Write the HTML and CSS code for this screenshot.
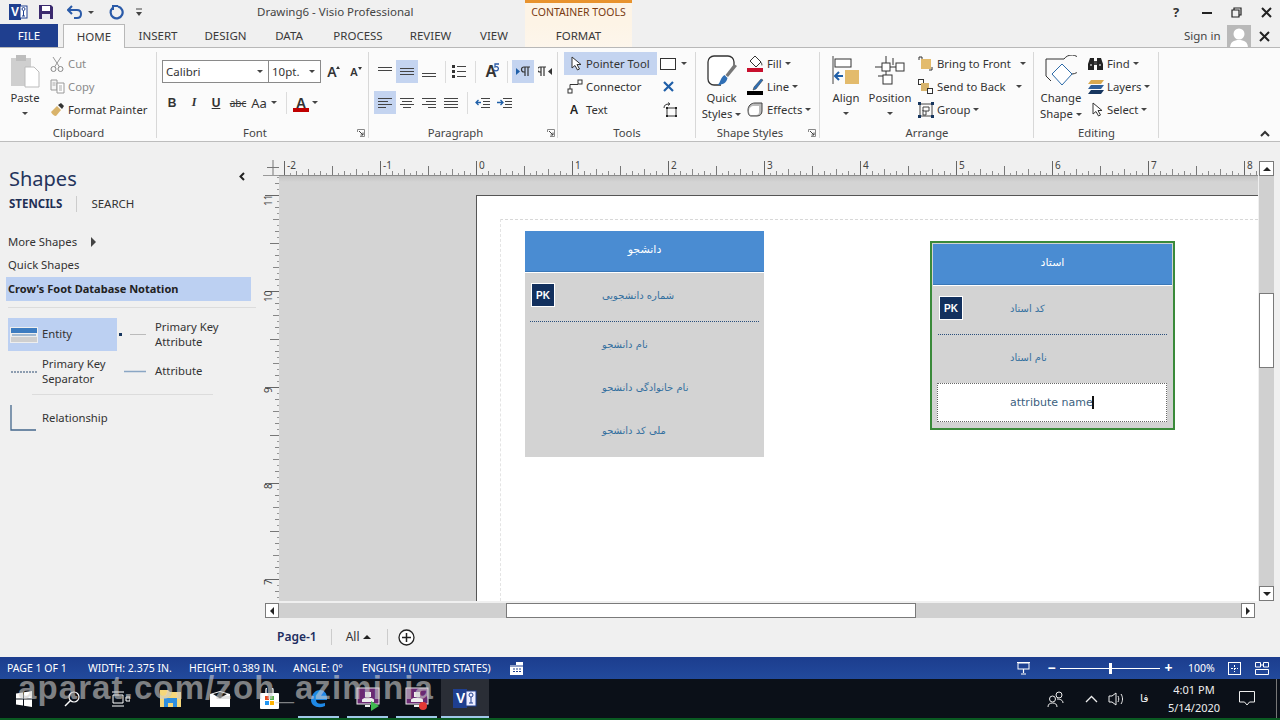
FILE: index.html
```html
<!DOCTYPE html>
<html lang="en">
<head>
<meta charset="utf-8">
<title>Drawing6 - Visio Professional</title>
<link rel="stylesheet" href="styles.css">
</head>
<body>
<div class="app">

<header class="titlebar">
  <div class="qat">
    <svg class="q q-v" width="20" height="18" viewBox="0 0 20 18"><rect x="0" y="1" width="12" height="16" fill="#1f3f8f"/><text x="2" y="13" class="svgv">V</text><rect x="11" y="3" width="7" height="12" fill="#fff" stroke="#1f3f8f"/><circle cx="14.5" cy="6" r="1.5" fill="none" stroke="#1f3f8f"/><path d="M14.5 8v5M13 13h3" stroke="#1f3f8f" fill="none"/></svg>
    <svg class="q q-save" width="16" height="16" viewBox="0 0 16 16"><path d="M1 1h12l2 2v12H1z" fill="#3b2a6e"/><rect x="4" y="2" width="8" height="5" fill="#fff"/><rect x="4" y="10" width="8" height="5" fill="#e8e8f0"/></svg>
    <svg class="q q-undo" width="16" height="14" viewBox="0 0 16 14"><path d="M5 1L1 5l4 4M1 5h9c3 0 4 2 4 4s-1 4-4 4H7" fill="none" stroke="#2a5aa8" stroke-width="2"/></svg>
    <i class="caret q-c1"></i>
    <svg class="q q-redo" width="16" height="16" viewBox="0 0 16 16"><path d="M9 2.500a6 6 0 1 1-5.500 1.500" fill="none" stroke="#2a5aa8" stroke-width="2.200"/><path d="M3 1h6v2H5v3H3z" fill="#2a5aa8"/></svg>
    <svg class="q q-cust" width="8" height="9" viewBox="0 0 8 9"><path d="M1 1h6" stroke="#444"/><path d="M1 4h6L4 8z" fill="#444"/></svg>
  </div>
  <div class="doc-title">Drawing6 - Visio Professional</div>
  <div class="tool-head">CONTAINER TOOLS</div>
  <div class="winbtns">
    <span class="help">?</span>
    <svg width="10" height="10" viewBox="0 0 10 10"><path d="M0 6h10" stroke="#222" stroke-width="2"/></svg>
    <svg width="11" height="11" viewBox="0 0 11 11"><path d="M3 3V1h7v7H8M1 3h7v7H1z" fill="none" stroke="#222" stroke-width="1.200"/></svg>
    <svg width="11" height="11" viewBox="0 0 11 11"><path d="M1 1l9 9M10 1l-9 9" stroke="#222" stroke-width="2"/></svg>
  </div>
</header>

<nav class="tabs">
  <div class="tab tab-file">FILE</div>
  <div></div>
  <div class="tab tab-active">HOME</div>
  <div class="tab">INSERT</div>
  <div class="tab">DESIGN</div>
  <div class="tab">DATA</div>
  <div class="tab">PROCESS</div>
  <div class="tab">REVIEW</div>
  <div class="tab">VIEW</div>
  <div class="tab tab-tool">FORMAT</div>
  <div class="account">
    <span class="signin">Sign in</span>
    <svg class="avatar" width="24" height="23" viewBox="0 0 24 23"><rect width="24" height="23" fill="#b9b9b9"/><circle cx="12" cy="9" r="5.500" fill="#fff"/><path d="M3 23c0-6 4-8 9-8s9 2 9 8z" fill="#fff"/></svg>
    <svg width="11" height="11" viewBox="0 0 11 11"><path d="M1 1l9 9M10 1l-9 9" stroke="#222" stroke-width="2"/></svg>
  </div>
</nav>

<section class="ribbon">

  <div class="group g-clip">
    <div class="g-body cols">
      <div class="big w-paste">
        <div class="big-ic">
          <svg width="30" height="34" viewBox="0 0 30 34"><rect x="1" y="4" width="20" height="28" fill="#cfcfcf"/><rect x="6" y="1" width="10" height="6" fill="#bdbdbd"/><path d="M15 13h9l5 5v15H15z" fill="#fff" stroke="#bbb"/></svg>
        </div>
        <span>Paste</span>
        <i class="caret big-caret"></i>
      </div>
      <div class="rows w-clipitems">
        <div class="item dim"><span class="slot s22 p4"><svg width="14" height="16" viewBox="0 0 14 16"><circle cx="3.500" cy="13" r="2.500" fill="none" stroke="#888"/><circle cx="10.500" cy="13" r="2.500" fill="none" stroke="#888"/><path d="M4.500 11L11 1M9.500 11L3 1" stroke="#999" fill="none"/></svg></span>Cut</div>
        <div class="item dim"><span class="slot s22 p4"><svg width="15" height="15" viewBox="0 0 15 15"><path d="M1 1h6v10H1z" fill="#f5f5f5" stroke="#999"/><path d="M7 4h7v10H7z" fill="#fff" stroke="#999"/><path d="M9 7h3M9 9h3M9 11h3M2.500 4h3M2.500 6h3" stroke="#aaa"/></svg></span>Copy</div>
        <div class="item"><span class="slot s22 p4"><svg width="16" height="15" viewBox="0 0 16 15"><path d="M1 10l6-6 4 4-5 6c-2 0-4-2-5-4z" fill="#d9b36a"/><path d="M8 3l3-2 3 3-2 3z" fill="#333"/></svg></span>Format Painter</div>
      </div>
    </div>
    <div class="g-label">Clipboard</div>
  </div>

  <div class="group g-font">
    <div class="g-body two-rows pad-font">
      <div class="line">
        <div class="combo c-font"><span>Calibri</span><i class="caret"></i></div>
        <div class="combo c-size"><span>10pt.</span><i class="caret"></i></div>
        <span class="btn bigA">A<i class="up"></i></span>
        <span class="btn smallA">A<i class="up down"></i></span>
      </div>
      <div class="line line-f2">
        <span class="btn b">B</span>
        <span class="btn it">I</span>
        <span class="btn un">U</span>
        <span class="btn st">abc</span>
        <span class="btn aa">Aa</span><i class="caret"></i>
        <span class="sep sep-f"></span>
        <span class="btn fc">A</span><i class="caret"></i>
      </div>
    </div>
    <div class="g-label lab-l">Font</div>
    <svg class="launch" width="8" height="8" viewBox="0 0 8 8"><path d="M.5 3V.5H7.500V7.500H3" fill="none" stroke="#888"/><path d="M2 2l4 4M6 3.500V6H3.500" fill="none" stroke="#444"/></svg>
  </div>

  <div class="group g-para">
    <div class="g-body two-rows pad-para">
      <div class="line">
        <span class="btn"><svg class="ln" width="14" height="9" viewBox="0 0 14 9"><path d="M0 .5h14M0 3.500h14" stroke="#444"/></svg></span>
        <span class="btn on"><svg class="ln" width="14" height="9" viewBox="0 0 14 9"><path d="M0 1.500h14M0 4.500h14M0 7.500h14" stroke="#444"/></svg></span>
        <span class="btn"><svg class="ln lnb" width="14" height="9" viewBox="0 0 14 9"><path d="M0 5.500h14M0 8.500h14" stroke="#444"/></svg></span>
        <span class="sep"></span>
        <span class="btn"><svg width="14" height="15" viewBox="0 0 14 15"><path d="M5 2.500h9M5 7.500h9M5 12.500h9" stroke="#444"/><rect x="0" y="1" width="3" height="3" fill="#333"/><rect x="0" y="6" width="3" height="3" fill="#333"/><rect x="0" y="11" width="3" height="3" fill="#333"/></svg></span>
        <span class="sep sep-w"></span>
        <span class="btn"><span class="dirA">A</span><svg class="arc" width="7" height="9" viewBox="0 0 7 9"><path d="M6 1H2v3c3-1 4 1 3 3-1 1-3 1-4 0" fill="none" stroke="#2a5aa8" stroke-width="1.300"/></svg></span>
        <span class="sep sep-w"></span>
        <span class="btn on"><svg width="14" height="11" viewBox="0 0 14 11"><path d="M0 2l4 3.500L0 9z" fill="#1f5fa8"/><path d="M8 1h6M8 1a2.500 2.500 0 0 0 0 5h1M9 1v9M12 1v9" fill="none" stroke="#333" stroke-width="1.200"/></svg></span>
        <span class="btn"><svg width="14" height="11" viewBox="0 0 14 11"><path d="M2 1h6M2 1a2.500 2.500 0 0 0 0 5h1M3 1v9M6 1v9" fill="none" stroke="#333" stroke-width="1.200"/><path d="M14 2l-4 3.500L14 9z" fill="#333"/></svg></span>
      </div>
      <div class="line">
        <span class="btn on"><svg width="14" height="11" viewBox="0 0 14 11"><path d="M0 1.500h14M0 4.500h10M0 7.500h14M0 10.500h8" stroke="#444"/></svg></span>
        <span class="btn"><svg width="14" height="11" viewBox="0 0 14 11"><path d="M0 1.500h14M2 4.500h10M0 7.500h14M3 10.500h8" stroke="#444"/></svg></span>
        <span class="btn"><svg width="14" height="11" viewBox="0 0 14 11"><path d="M0 1.500h14M4 4.500h10M0 7.500h14M6 10.500h8" stroke="#444"/></svg></span>
        <span class="btn"><svg width="14" height="11" viewBox="0 0 14 11"><path d="M0 1.500h14M0 4.500h14M0 7.500h14M0 10.500h14" stroke="#444"/></svg></span>
        <span class="sep sep-n"></span>
        <span class="btn"><svg width="15" height="11" viewBox="0 0 15 11"><path d="M6 1.500h9M8 4.500h7M8 7.500h7M6 10.500h9" stroke="#444"/><path d="M6 5.500H1M3.500 3L1 5.500 3.500 8" fill="none" stroke="#1f5fa8" stroke-width="1.300"/></svg></span>
        <span class="btn"><svg width="15" height="11" viewBox="0 0 15 11"><path d="M6 1.500h9M8 4.500h7M8 7.500h7M6 10.500h9" stroke="#444"/><path d="M0 5.500h6M3.500 3L6 5.500 3.500 8" fill="none" stroke="#1f5fa8" stroke-width="1.300"/></svg></span>
      </div>
    </div>
    <div class="g-label lab-l">Paragraph</div>
    <svg class="launch launch-p" width="8" height="8" viewBox="0 0 8 8"><path d="M.5 3V.5H7.500V7.500H3" fill="none" stroke="#888"/><path d="M2 2l4 4M6 3.500V6H3.500" fill="none" stroke="#444"/></svg>
  </div>

  <div class="group g-tools">
    <div class="g-body tools-grid">
      <div class="item on"><span class="slot s22 p7"><svg width="11" height="15" viewBox="0 0 11 15"><path d="M1 1v11l3-2.500L6.500 14l2-1L6 8.500h4z" fill="#fff" stroke="#333"/></svg></span>Pointer Tool</div>
      <div class="item tool-r"><svg width="16" height="12" viewBox="0 0 16 12"><rect x=".5" y=".5" width="15" height="11" fill="#fff" stroke="#333"/></svg><i class="caret"></i></div>
      <div class="item"><span class="slot s22 p3"><svg width="16" height="15" viewBox="0 0 16 15"><rect x="11" y="1" width="4" height="4" fill="#fff" stroke="#333"/><rect x="1" y="10" width="4" height="4" fill="#fff" stroke="#333"/><path d="M3 10V5.500h8" fill="none" stroke="#333"/></svg></span>Connector</div>
      <div class="item tool-r tool-x"><svg width="11" height="11" viewBox="0 0 11 11"><path d="M1 1l9 9M10 1l-9 9" stroke="#1f5fa8" stroke-width="2.200"/></svg></div>
      <div class="item"><span class="slot s22 p6 a-glyph">A</span>Text</div>
      <div class="item tool-r tool-x"><svg width="15" height="16" viewBox="0 0 15 16"><rect x="4" y="6" width="9" height="8" fill="none" stroke="#333"/><rect x="3" y="5" width="2" height="2" fill="#222"/><rect x="12" y="5" width="2" height="2" fill="#222"/><rect x="3" y="13" width="2" height="2" fill="#222"/><rect x="12" y="13" width="2" height="2" fill="#222"/><path d="M1 6c0-3 2-4 5-4M5 .5L7 2 5 3.500" fill="none" stroke="#333"/></svg></div>
    </div>
    <div class="g-label">Tools</div>
  </div>

  <div class="group g-styles">
    <div class="g-body cols">
      <div class="big w-quick">
        <div class="big-ic"><svg width="30" height="32" viewBox="0 0 30 32"><path d="M14 30H7a6 6 0 0 1-6-6V7a6 6 0 0 1 6-6h14a6 6 0 0 1 6 6v4" fill="#fff" stroke="#333" stroke-width="1.300"/><path d="M30 11l-9 11-2.500-2L27 9z" fill="#777"/><path d="M17.500 20l3 3c-1 5-5 7-10 7 3-2 3-8 7-10z" fill="#2f6fb5"/></svg></div>
        <span>Quick</span>
        <span>Styles<i class="caret"></i></span>
      </div>
      <div class="rows w-styleitems">
        <div class="item"><span class="slot s20"><svg width="17" height="17" viewBox="0 0 17 17"><path d="M8 1l6 6-5 5-6-6z" fill="#fff" stroke="#333"/><path d="M14 7c1 1 2 2 1 4-1-1-1-3-1-4z" fill="#555"/><rect x="0" y="13" width="16" height="4" fill="#c8102e"/></svg></span>Fill<i class="caret"></i></div>
        <div class="item"><span class="slot s20"><svg width="17" height="18" viewBox="0 0 17 18"><path d="M14 1l2 1-7 9-3 1 1-3z" fill="#2f6fb5" stroke="#333" stroke-width=".5"/><rect x="0" y="13" width="16" height="4" fill="#000"/></svg></span>Line<i class="caret"></i></div>
        <div class="item"><span class="slot s20"><svg width="16" height="15" viewBox="0 0 16 15"><path d="M1 8c0-4 3-7 7-7h7v8c0 3-2 5-5 5H4c-2 0-3-2-3-6z" fill="#bbb" stroke="#444"/><path d="M2 9c0-3 2-5 5-5h5v6c0 2-1 3-3 3H4c-1 0-2-2-2-4z" fill="#fff"/></svg></span>Effects<i class="caret"></i></div>
      </div>
    </div>
    <div class="g-label lab-l">Shape Styles</div>
    <svg class="launch" width="8" height="8" viewBox="0 0 8 8"><path d="M.5 3V.5H7.500V7.500H3" fill="none" stroke="#888"/><path d="M2 2l4 4M6 3.500V6H3.500" fill="none" stroke="#444"/></svg>
  </div>

  <div class="group g-arrange">
    <div class="g-body cols">
      <div class="big w-align">
        <div class="big-ic"><svg width="28" height="30" viewBox="0 0 28 30"><path d="M1 0v28" stroke="#444"/><rect x="3" y="3" width="16" height="8" fill="#fff" stroke="#333"/><rect x="13" y="14" width="14" height="14" fill="#e3bb6c"/><path d="M3 20h8M7 16l-4 4 4 4" fill="none" stroke="#1f5fa8" stroke-width="2"/></svg></div>
        <span>Align</span>
        <i class="caret big-caret"></i>
      </div>
      <div class="big w-pos">
        <div class="big-ic"><svg width="30" height="30" viewBox="0 0 30 30"><path d="M11 0v7M11 15v4M0 11h7M15 11h6M18 2v7M3 20h6" stroke="#333" fill="none"/><rect x="7" y="7" width="8" height="8" fill="#fff" stroke="#333"/><rect x="21" y="7" width="8" height="8" fill="#fff" stroke="#333"/><rect x="8" y="19" width="9" height="9" fill="#fff" stroke="#333"/></svg></div>
        <span>Position</span>
        <i class="caret big-caret"></i>
      </div>
      <div class="rows w-arritems">
        <div class="item"><span class="slot s23"><svg width="15" height="15" viewBox="0 0 15 15"><path d="M4 4V1H1v3M11 14h3v-3" fill="none" stroke="#333"/><rect x="3" y="3" width="10" height="10" fill="#e3bb6c"/></svg></span>Bring to Front<i class="caret c-bf"></i></div>
        <div class="item"><span class="slot s23"><svg width="15" height="15" viewBox="0 0 15 15"><rect x=".5" y=".5" width="5" height="5" fill="#fff" stroke="#333"/><rect x="3" y="4" width="8" height="8" fill="#d8b56e"/><rect x="9.500" y="9.500" width="5" height="5" fill="#fff" stroke="#333"/></svg></span>Send to Back<i class="caret c-sb"></i></div>
        <div class="item"><span class="slot s23"><svg width="16" height="16" viewBox="0 0 16 16"><path d="M2 5V2h12v12H2V5M5 5h6v4H5zM8 9v4H5V8" fill="none" stroke="#444"/><rect x="0" y="0" width="3" height="3" fill="#17365f"/><rect x="13" y="0" width="3" height="3" fill="#17365f"/><rect x="0" y="13" width="3" height="3" fill="#17365f"/><rect x="13" y="13" width="3" height="3" fill="#17365f"/></svg></span>Group<i class="caret"></i></div>
      </div>
    </div>
    <div class="g-label">Arrange</div>
  </div>

  <div class="group g-edit">
    <div class="g-body cols">
      <div class="big w-change">
        <div class="big-ic"><svg width="32" height="32" viewBox="0 0 32 32"><path d="M1 4h18M1 4v17l5 5M19 4a9.500 9.500 0 1 1 8 15" fill="none" stroke="#333"/><path d="M17 9l10 10-10 11-10-11z" fill="#fff" stroke="#2c6aa8"/></svg></div>
        <span>Change</span>
        <span>Shape<i class="caret"></i></span>
      </div>
      <div class="rows w-edititems">
        <div class="item"><span class="slot s19"><svg width="15" height="14" viewBox="0 0 15 14"><path d="M2 1h4v12H0V7zM9 1h4l2 6v6H9z" fill="#222"/><path d="M6 4h3v4H6z" fill="#444"/><path d="M2 8h2M11 8h2" stroke="#fff"/></svg></span>Find<i class="caret"></i></div>
        <div class="item"><span class="slot s19"><svg width="16" height="14" viewBox="0 0 16 14"><path d="M3 0h13l-3 4H0z" fill="#d9a94f"/><path d="M3 5h13l-3 4H0z" fill="#2f5f9a"/><path d="M3 10h13l-3 4H0z" fill="#17365f"/></svg></span>Layers<i class="caret"></i></div>
        <div class="item"><span class="slot s19 p4"><svg width="11" height="15" viewBox="0 0 11 15"><path d="M1 1v11l3-2.500L6.500 14l2-1L6 8.500h4z" fill="#fff" stroke="#333"/></svg></span>Select<i class="caret"></i></div>
      </div>
    </div>
    <div class="g-label">Editing</div>
  </div>

  <svg class="collapse" width="10" height="7" viewBox="0 0 10 7"><path d="M1 6l4-4 4 4" fill="none" stroke="#333" stroke-width="2"/></svg>
</section>

<main class="main">
  <aside class="shapes">
    <div class="sh-head"><h1>Shapes</h1><svg width="6" height="9" viewBox="0 0 6 9"><path d="M5 1L1.500 4.500 5 8" fill="none" stroke="#222" stroke-width="2"/></svg></div>
    <div class="sh-tabs"><b>STENCILS</b><span class="sh-sep"></span><span>SEARCH</span></div>
    <div class="sh-row sh-more"><span>More Shapes</span><i class="tri-r"></i></div>
    <div class="sh-row">Quick Shapes</div>
    <div class="sh-row sh-active">Crow's Foot Database Notation</div>
    <hr class="sh-hr">
    <div class="stencil">
      <div class="st-cell st-on st-l">
        <span class="st-ic"><svg width="28" height="16" viewBox="0 0 28 16"><rect x="0" y="0" width="28" height="16" fill="#eee"/><rect x="1" y="1" width="26" height="5" fill="#3d7cc0"/><rect x="1" y="10" width="26" height="5" fill="#cfcfcf"/><path d="M2 8h24" stroke="#5a87b5"/></svg></span>
        <span class="st-t">Entity</span>
      </div>
      <div class="st-cell st-r">
        <span class="st-ic"><svg width="32" height="5" viewBox="0 0 32 5"><rect x="0" y="1" width="3" height="3" fill="#17365f"/><path d="M11 2.500h16" stroke="#bbb"/></svg></span>
        <span class="st-t">Primary Key<br>Attribute</span>
      </div>
      <div class="st-cell st-l">
        <span class="st-ic"><svg width="26" height="2" viewBox="0 0 26 2"><path d="M0 1h26" stroke="#2a4a70" stroke-dasharray="2 1"/></svg></span>
        <span class="st-t">Primary Key<br>Separator</span>
      </div>
      <div class="st-cell st-r">
        <span class="st-ic"><svg width="24" height="3" viewBox="0 0 24 3"><path d="M1 1.500h22" stroke="#8aa6c4" stroke-width="1.500"/></svg></span>
        <span class="st-t">Attribute</span>
      </div>
    </div>
    <hr class="sh-hr2">
    <div class="st-cell st-rel">
      <span class="st-ic"><svg width="26" height="26" viewBox="0 0 26 26"><path d="M1 0v25h25" fill="none" stroke="#44678c" stroke-width="1.300"/></svg></span>
      <span class="st-t">Relationship</span>
    </div>
  </aside>

  <section class="work">
    <div class="ruler-corner"><svg width="12" height="15" viewBox="0 0 12 15"><path d="M6 0v15M0 7.500h12" stroke="#777"/></svg></div>
    <div class="ruler-top"><span>-2</span><span>-1</span><span>0</span><span>1</span><span>2</span><span>3</span><span>4</span><span>5</span><span>6</span><span>7</span><span>8</span></div>
    <div class="vscroll">
      <div class="sb-btn"><i class="t-up"></i></div>
      <div class="sb-track sb-a"></div>
      <div class="sb-thumb"></div>
      <div class="sb-track sb-b"></div>
      <div class="sb-btn"><i class="t-dn"></i></div>
    </div>
    <div class="ruler-left"><span>11</span><span>10</span><span>9</span><span>8</span><span>7</span></div>
    <div class="canvas">
      <div class="page"><div class="page-margin"></div></div>

      <article class="entity ent-a">
        <div class="ent-head" dir="rtl">دانشجو</div>
        <div class="ent-row ent-pk"><span class="pk">PK</span><span class="fa">شماره دانشجویی</span></div>
        <div class="ent-sep"></div>
        <div class="ent-row"><span class="fa">نام دانشجو</span></div>
        <div class="ent-row"><span class="fa">نام خانوادگی دانشجو</span></div>
        <div class="ent-row"><span class="fa">ملی کد دانشجو</span></div>
      </article>

      <article class="entity ent-b">
        <div class="ent-head" dir="rtl">استاد</div>
        <div class="ent-row ent-pk"><span class="pk">PK</span><span class="fa">کد استاد</span></div>
        <div class="ent-sep"></div>
        <div class="ent-row"><span class="fa">نام استاد</span></div>
        <div class="ent-edit"><span>attribute name</span><i class="text-caret"></i></div>
      </article>
    </div>
    <div class="hscroll">
      <div class="sb-btn"><i class="t-lf"></i></div>
      <div class="sb-track h-a"></div>
      <div class="sb-thumb h-t"></div>
      <div class="sb-track h-b"></div>
      <div class="sb-btn"><i class="t-rt"></i></div>
    </div>
    <div class="pagetabs">
      <b>Page-1</b><span class="pt-sep"></span><span>All</span><i class="t-up"></i><span class="pt-sep pt-s2"></span>
      <svg width="17" height="17" viewBox="0 0 17 17"><circle cx="8.500" cy="8.500" r="7.500" fill="#fff" stroke="#222" stroke-width="1.300"/><path d="M8.500 4v9M4 8.500h9" stroke="#222" stroke-width="1.500"/></svg>
    </div>
  </section>
</main>

<footer class="status">
  <span class="s1">PAGE 1 OF 1</span>
  <span class="s2">WIDTH: 2.375 IN.</span>
  <span class="s3">HEIGHT: 0.389 IN.</span>
  <span class="s4">ANGLE: 0°</span>
  <span class="s5">ENGLISH (UNITED STATES)</span>
  <svg class="s6" width="13" height="13" viewBox="0 0 13 13"><rect width="13" height="13" fill="#fff"/><path d="M0 4h13M3 7h2M6 7h2M9 7h2M3 9.500h2M6 9.500h2M9 9.500h2" stroke="#1f3f8f"/><rect x="0" y="0" width="6" height="3" fill="#1f3f8f"/></svg>
  <div class="st-right">
    <svg width="13" height="13" viewBox="0 0 13 13"><rect x="1" y="1" width="11" height="6" fill="none" stroke="#fff"/><path d="M0 .5h13M6.500 7v4M4 12h5" stroke="#fff" stroke-width="1.200"/></svg>
    <div class="zoom"><span class="z-pm">−</span><span class="z-track"><i class="z-thumb"></i></span><span class="z-pm">+</span></div>
    <span class="z-val">100%</span>
    <svg width="13" height="13" viewBox="0 0 13 13"><rect x=".5" y=".5" width="12" height="12" fill="none" stroke="#fff"/><path d="M3 6.500h7M6.500 3v7" stroke="#fff" stroke-dasharray="2 1"/></svg>
    <svg class="z-last" width="14" height="13" viewBox="0 0 14 13"><path d="M.5 5V.5h5V5zM8.500 5V.5h5V5zM.5 12.500V7.500h13v5zM5.500 3h3" fill="none" stroke="#fff"/></svg>
  </div>
</footer>

<div class="taskbar">
  <div class="tb tb48"><svg width="16" height="16" viewBox="0 0 16 16"><path d="M0 2.500L7 1.500V7.500H0zM8 1.300L16 0V7.500H8zM0 8.500H7V14.500L0 13.500zM8 8.500H16V16L8 14.700z" fill="#fff"/></svg></div>
  <div class="tb tb48"><svg width="16" height="16" viewBox="0 0 16 16"><circle cx="10" cy="6" r="5" fill="none" stroke="#fff" stroke-width="1.200"/><path d="M6.500 9.500L1 15" stroke="#fff" stroke-width="1.500"/></svg></div>
  <div class="tb tb50"><svg width="18" height="16" viewBox="0 0 18 16"><path d="M0 1h12M0 15h12M1 4h10v8H1zM14 6h4v4h-4z" fill="none" stroke="#fff"/></svg></div>
  <div class="tb tb49"><svg width="21" height="19" viewBox="0 0 21 19"><path d="M0 1h8l2 2h11v15H0z" fill="#f6d77a"/><path d="M4 9h13v9h-4v-4H8v4H4z" fill="#2f8fe0"/></svg></div>
  <div class="tb tb49"><svg width="20" height="16" viewBox="0 0 20 16"><rect y="3" width="20" height="13" fill="#fff"/><path d="M0 3l10-3 10 3-10 6z" fill="#fff"/><path d="M3 3l7-2 7 2-7 4.500z" fill="#111"/></svg></div>
  <div class="tb tb50"><svg width="19" height="21" viewBox="0 0 19 21"><rect y="5" width="19" height="16" rx="1" fill="#fff"/><path d="M6 5V2a3 3 0 0 1 7 0v3" fill="none" stroke="#fff" stroke-width="1.300"/><rect x="5" y="8" width="4" height="4" fill="#e64a19"/><rect x="10" y="8" width="4" height="4" fill="#4caf50"/><rect x="5" y="13" width="4" height="4" fill="#2196f3"/><rect x="10" y="13" width="4" height="4" fill="#ffb300"/></svg></div>
  <div class="tb tb49 tb-run"><svg width="18" height="20" viewBox="0 0 18 20"><path d="M1 11C2 4 6 1 10 1c4 0 7 3 7 8v2H6c0 3 3 5 9 3v3c-7 3-14 0-14-6z" fill="#1e88e5"/></svg></div>
  <div class="tb tb49 tb-run"><svg width="24" height="24" viewBox="0 0 24 24"><rect x="1" y="1" width="22" height="16" fill="#6a2a72" stroke="#eee"/><rect x="9" y="5" width="6" height="5" fill="#eee"/><path d="M6 13c0-3 12-3 12 0v2H6z" fill="#eee"/><path d="M9 19h5" stroke="#eee" stroke-width="2"/><path d="M15 14l8 5-8 5z" fill="#3fb950"/></svg></div>
  <div class="tb tb49 tb-run"><svg width="24" height="24" viewBox="0 0 24 24"><rect x="1" y="1" width="22" height="16" fill="#6a2a72" stroke="#eee"/><rect x="9" y="5" width="6" height="5" fill="#eee"/><path d="M6 13c0-3 12-3 12 0v2H6z" fill="#eee"/><path d="M9 19h5" stroke="#eee" stroke-width="2"/><circle cx="18" cy="19" r="4" fill="#e53935"/></svg></div>
  <div class="tb tb48 tb-active tb-run"><svg width="24" height="21" viewBox="0 0 24 21"><rect x="0" y="1" width="14" height="19" fill="#1f3f8f"/><text x="3" y="15" class="svgv2">V</text><rect x="13" y="3" width="10" height="15" fill="#eef" stroke="#1f3f8f"/><circle cx="18" cy="7" r="2" fill="none" stroke="#1f3f8f"/><path d="M18 9v6M16 15h4" stroke="#1f3f8f" fill="none"/></svg></div>
  <div class="tray">
    <svg class="tr-people" width="17" height="16" viewBox="0 0 17 16"><circle cx="5.500" cy="8" r="3" fill="none" stroke="#eee"/><circle cx="12" cy="4" r="3" fill="none" stroke="#eee"/><path d="M1 16c0-3 2-4 4.500-4S10 13 10 16M10 8c3 0 6 1 6 4" fill="none" stroke="#eee"/></svg>
    <svg class="tr-chev" width="13" height="8" viewBox="0 0 13 8"><path d="M1 7l5.500-5.500L12 7" fill="none" stroke="#eee" stroke-width="1.300"/></svg>
    <svg class="tr-vol" width="17" height="14" viewBox="0 0 17 14"><path d="M1 4h3l4-3v12L4 10H1z" fill="none" stroke="#eee"/><path d="M10 4c1 2 1 4 0 6M13 2c2 3 2 7 0 10" fill="none" stroke="#eee"/></svg>
    <span class="tr-lang">فا</span>
    <div class="clock"><span>4:01 PM</span><span>5/14/2020</span></div>
    <svg class="tr-note" width="16" height="15" viewBox="0 0 16 15"><path d="M.5.5h15v10.500h-5l-2.500 3-2.500-3h-5z" fill="none" stroke="#eee"/></svg>
    <i class="tr-edge"></i>
  </div>
</div>

</div>
<div class="watermark">aparat.com/zoh_aziminia</div>
</body>
</html>
```

FILE: styles.css
```css
*{box-sizing:border-box}
html,body{margin:0;padding:0;width:1280px;height:720px;overflow:hidden}
body{background:#f0f0f0;color:#333;font:11.3px/16px "Noto Sans","Open Sans",sans-serif;position:relative}
svg{display:block;flex:none}
i{font-style:normal}
.app{display:flex;flex-direction:column;height:720px}

/* title bar */
.titlebar{height:24px;display:flex;align-items:center;position:relative}
.qat{width:257px;display:flex;align-items:center;padding-left:9px}
.q-save{margin-left:9px}
.q-undo{margin-left:13px}
.q-c1{margin-left:5px}
.q-redo{margin-left:15px}
.q-cust{margin-left:10px}
.svgv{font:bold 12px "Liberation Sans",sans-serif;fill:#fff}
.svgv2{font:bold 14px "Liberation Sans",sans-serif;fill:#fff}
.doc-title{width:268px;font-size:11.5px;color:#444}
.tool-head{width:107px;height:24px;border-top:3px solid #e8932e;background:#fdf4e6;color:#7a3b12;text-align:center;font-size:10.5px;line-height:18px}
.winbtns{flex:1;display:flex;align-items:center;padding-left:541px;gap:19px}
.help{font-weight:700;font-size:13px;color:#333;width:8px;margin-right:2px}

/* tabs */
.tabs{height:23px;display:grid;grid-template-columns:58px 5px 62px 66px 69px 58px 80px 65px 62px 107px 1fr;font-size:11.5px}
.tab{display:flex;align-items:center;justify-content:center;color:#3a3a3a}
.tab-file{background:#1f3f8f;color:#fff}
.tab-active{background:#fbfbfb;border:1px solid #b8b8b8;border-bottom:0;height:24px;position:relative;z-index:1}
.tab-tool{background:linear-gradient(#fdf4e6,#fdf6ec)}
.account{display:flex;align-items:center;padding-left:552px;position:relative}
.signin{color:#444;width:43px}
.avatar{margin-right:8px}

/* ribbon */
.ribbon{height:95px;background:#fbfbfb;border-top:1px solid #b8b8b8;border-bottom:1px solid #bdbdbd;display:flex;position:relative}
.group{position:relative;display:flex;flex-direction:column;height:93px;flex:none}
.group::after{content:"";position:absolute;right:0;top:4px;bottom:3px;width:1px;background:#d8d8d8}
.g-body{height:77px;flex:none}
.g-label{height:16px;text-align:center;font-size:11.3px;color:#444;line-height:16px;flex:none}
.lab-l{padding-right:16px}
.launch{position:absolute;right:4px;bottom:4px}
.launch-p{right:3px}
.g-clip{width:157px}
.g-font{width:212px}
.g-para{width:189px}
.g-tools{width:138px}
.g-styles{width:124px}
.g-arrange{width:214px}
.g-edit{width:125px}
.cols{display:flex}
.rows{padding-top:4px;display:grid;grid-auto-rows:23px}
.item{display:flex;align-items:center;height:23px;white-space:nowrap}
.item .caret{margin-left:3px}
.dim{color:#8a8a8a}
.slot{display:flex;align-items:center;flex:none;height:23px;justify-content:flex-start}
.s19{width:19px}
.s20{width:20px}
.s22{width:22px}
.s23{width:23px;padding-left:4px}
.p3{padding-left:3px}
.p4{padding-left:4px}
.p6{padding-left:6px}
.p7{padding-left:7px}
.big{display:flex;flex-direction:column;align-items:center;padding-top:4px;line-height:16px;white-space:nowrap;flex:none}
.big-ic{height:38px;display:flex;align-items:center;justify-content:center}
.big .caret{margin-left:3px;vertical-align:middle}
.big-caret{margin:6px 0 0 0 !important}
.w-paste{width:46px;padding-left:4px}
.w-clipitems{width:110px}
.w-quick{width:51px}
.w-styleitems{width:72px}
.w-align{width:46px;padding-left:6px}
.w-pos{width:48px}
.w-arritems{width:119px}
.w-change{width:54px}
.w-edititems{width:70px}
.caret{display:inline-block;width:0;height:0;border-left:3px solid transparent;border-right:3px solid transparent;border-top:3px solid #444;flex:none}
.c-bf{margin-left:9px !important}
.c-sb{margin-left:11px !important}

.two-rows{padding-top:12px;display:flex;flex-direction:column;gap:8px}
.pad-font{padding-left:5px}
.pad-para{padding-left:5px}
.line{display:flex;align-items:center;height:23px;flex:none}
.line-f2{margin-left:-1px}
.btn{width:22px;height:23px;display:flex;align-items:center;justify-content:center;position:relative;flex:none}
.btn.on,.item.on{background:#c4d4f0}
.combo{height:23px;background:#fff;border:1px solid #8a8a8a;display:flex;align-items:center;justify-content:space-between;padding:0 5px 0 3px;font-size:11.5px;color:#333;flex:none}
.c-font{width:107px}
.c-size{width:53px;margin-left:-1px}
.bigA,.smallA{font-weight:600;color:#333}
.bigA{font-size:14px}
.smallA{font-size:11px}
.up{position:absolute;right:3px;top:6px;width:0;height:0;border-left:2px solid transparent;border-right:2px solid transparent;border-bottom:3px solid #333}
.up.down{top:7px;border-bottom:0;border-top:3px solid #333}
.b{font:700 12px "Liberation Sans",sans-serif}
.it{font:italic 700 12px "Liberation Serif",serif}
.un{font:700 12px "Liberation Sans",sans-serif;text-decoration:underline}
.st{font-size:10px;text-decoration:line-through}
.aa{font-size:13px;width:20px;margin-right:2px}
.fc{font:700 14px "Liberation Sans",sans-serif}
.fc::after{content:"";position:absolute;left:3px;right:3px;bottom:2px;height:4px;background:#c00000}
.sep{width:1px;height:22px;background:#dcdcdc;margin:0 2px 0 5px;flex:none}
.sep-w{margin:0 4px 0 5px}
.sep-n{margin:0 3px 0 5px}
.sep-f{margin:0 3px 0 9px}
.lnb{margin-top:1px}
.dirA{font:700 16px "Liberation Sans",sans-serif;color:#333}
.arc{position:absolute;right:2px;top:3px}

.tools-grid{padding:4px 0 0 6px;display:grid;grid-template-columns:93px 1fr;grid-auto-rows:23px}
.tool-r{padding-left:3px}
.tool-x{padding-left:6px}
.tool-r .caret{margin-left:5px}
.a-glyph{font-weight:600;color:#222;font-size:12px}
.collapse{position:absolute;right:10px;bottom:4px}

/* main */
.main{flex:1;display:flex;min-height:0}
.shapes{width:263px;padding-top:24px;position:relative;flex:none}
.sh-head{display:flex;justify-content:space-between;align-items:center;height:26px;padding:0 18px 0 9px}
.sh-head svg{margin-top:-6px}
.sh-head h1{margin:0;font-size:20px;font-weight:400;color:#24345c;line-height:26px}
.sh-tabs{height:20px;display:flex;align-items:center;padding-left:9px;margin-top:2px;color:#333;font-size:11.500px}
.sh-tabs b{color:#1f2f55;font-weight:700}
.sh-sep{width:1px;height:16px;background:#ccc;margin:0 14px}
.sh-row{height:23px;display:flex;align-items:center;padding-left:8px;color:#333}
.sh-more{margin-top:16px}
.tri-r{width:0;height:0;border-left:5px solid #444;border-top:5px solid transparent;border-bottom:5px solid transparent;margin-left:14px}
.sh-active{background:#bcd0f2;margin:1px 12px 0 6px;padding-left:2px;height:24px;font-weight:700;color:#222;font-size:11px}
.sh-hr{border:0;border-top:1px solid #dcdcdc;margin:6px 7px 0 8px}
.sh-hr2{border:0;border-top:1px solid #dcdcdc;margin:2px 50px 0 32px}
.stencil{display:grid;grid-template-columns:109px 132px;grid-template-rows:33px 41px;margin:10px 0 0 8px}
.st-cell{display:flex;align-items:center;line-height:15px;color:#333}
.st-t{margin-top:-2px}
.st-ic{display:flex;align-items:center;justify-content:center;flex:none}
.st-l .st-ic{width:34px;padding-right:3px}
.st-r .st-ic{width:38px;padding-right:2px}
.st-on{background:#bcd0f2}
.st-rel{height:40px;margin:3px 0 0 8px}
.st-rel .st-ic{width:34px;justify-content:flex-start;padding-left:2px}

/* work area */
.work{width:1017px;padding-top:17px;display:grid;grid-template-columns:16px 979px 17px 5px;grid-template-rows:17px 425px 19px 37px;flex:none}
.ruler-corner{grid-column:1;grid-row:1;display:flex;align-items:center;justify-content:flex-start;padding-left:4px;border-bottom:1px solid #999}
.ruler-top{grid-column:2;grid-row:1;display:flex;padding-left:5px;border-bottom:1px solid #8a8a8a;overflow:hidden;font-size:10px;line-height:11px;color:#444;
 background-repeat:repeat-x;
 background-image:linear-gradient(90deg,#666 1px,transparent 1px),linear-gradient(90deg,#777 1px,transparent 1px),linear-gradient(90deg,#888 1px,transparent 1px),linear-gradient(90deg,#888 1px,transparent 1px),linear-gradient(90deg,#999 1px,transparent 1px);
 background-size:96px 14px,48px 9px,24px 6px,12px 4px,6px 2px;
 background-position:5px bottom}
.ruler-top span{width:96px;flex:none;padding:1px 0 0 3px}
.ruler-left{grid-column:1;grid-row:2;display:flex;flex-direction:column;padding-top:19px;height:425px;font-size:10px;line-height:11px;color:#444;align-items:flex-start;
 background-repeat:repeat-y;
 background-image:linear-gradient(#666 1px,transparent 1px),linear-gradient(#777 1px,transparent 1px),linear-gradient(#888 1px,transparent 1px),linear-gradient(#888 1px,transparent 1px),linear-gradient(#999 1px,transparent 1px);
 background-size:14px 96px,9px 48px,6px 24px,4px 12px,2px 6px;
 background-position:right 19px}
.ruler-left span{height:14px;margin-bottom:82px;flex:none;writing-mode:vertical-rl;transform:rotate(180deg);text-align:right}
.canvas{grid-column:2;grid-row:2;position:relative;overflow:hidden;background:linear-gradient(#c3c3c3,#d4d4d4 6px)}
.page{position:absolute;left:197px;top:19px;right:0;bottom:0;background:#fff;border-left:1px solid #555;border-top:1px solid #555}
.page-margin{position:absolute;left:23px;top:23px;right:0;bottom:0;border-left:1px dashed #e4e4e4;border-top:1px dashed #d8d8d8}
.vscroll{grid-column:3;grid-row:1 / span 2;padding:2px 1px 0 1px;display:flex;flex-direction:column;height:442px}
.sb-btn{background:#fff;border:1px solid #7a7a7a;display:flex;align-items:center;justify-content:center;flex:none}
.vscroll .sb-btn{height:15px}
.sb-track{background:#d0d0d0;flex:none}
.sb-thumb{background:#fff;border:1px solid #7a7a7a;flex:none}
.sb-a{height:117px}
.vscroll .sb-thumb{height:75px}
.sb-b{height:218px}
.t-up,.t-dn{width:0;height:0;border-left:4px solid transparent;border-right:4px solid transparent;border-bottom:4px solid #222}
.t-dn{border-bottom:0;border-top:4px solid #222}
.t-lf,.t-rt{width:0;height:0;border-top:4px solid transparent;border-bottom:4px solid transparent;border-right:4px solid #222}
.t-rt{border-right:0;border-left:4px solid #222}
.hscroll{grid-column:1 / span 2;grid-row:3;padding:2px 0 2px 2px;display:flex}
.hscroll .sb-btn{width:14px}
.h-a{width:227px}
.h-t{width:410px}
.h-b{width:325px}
.pagetabs{grid-column:1 / span 2;grid-row:4;display:flex;align-items:center;padding:0 0 3px 14px;font-size:12px;color:#333}
.pagetabs b{color:#1d2d5f;font-weight:600}
.pt-sep{width:1px;height:16px;background:#ccc;margin:0 14px 0 14px}
.pagetabs .t-up{margin-left:3px}
.pt-s2{margin:0 10px 0 16px}

/* entities: free canvas */
.entity{position:absolute;width:239px;background:#d3d3d3;display:flex;flex-direction:column}
.ent-a{left:246px;top:55px;height:226px}
.ent-b{left:651px;top:65px;width:245px;height:189px;border:2px solid #3a8a3a;padding:1px;background:#d3d3d3 content-box,#fff}
.ent-head{height:41px;padding-bottom:4px;background:#4a8cd2;border-bottom:1px solid #3a78b8;color:#fff;display:flex;align-items:center;justify-content:center;font:11px "DejaVu Sans",sans-serif;box-shadow:0 1px 0 #fff;flex:none}
.ent-row{height:43px;padding-left:77px;display:flex;align-items:center;flex:none}
.ent-pk{height:46px;padding-left:6px}
.pk{width:24px;height:24px;background:#12305e;border:1px solid #fff;color:#fff;font:700 10px "Liberation Sans",sans-serif;display:flex;align-items:center;justify-content:center;margin-right:47px;flex:none}
.fa{font:10px "DejaVu Sans",sans-serif;color:#33709f}
.ent-sep{height:1px;margin:3px 5px 1px;border-top:1px dotted #2a4f7c;flex:none}
.ent-edit{margin:4px 5px 0 4px;height:39px;background:#fff;border:1px dotted #666;padding-left:72px;display:flex;align-items:center;font:11px/14px "DejaVu Sans",sans-serif;color:#3c5f80;flex:none}
.text-caret{width:2px;height:13px;background:#111;margin-left:-1px}

/* status */
.status{height:22px;background:linear-gradient(#1c3d8e,#224a9c);color:#fff;font-size:10.5px;display:flex;align-items:center;padding-left:7px;white-space:nowrap;flex:none}
.s1{width:81px}
.s2{width:101px}
.s3{width:104px}
.s4{width:69px}
.s5{width:148px}
.st-right{margin-left:auto;display:flex;align-items:center;padding-right:11px}
.zoom{display:flex;align-items:center;margin-left:17px}
.z-pm{font-weight:700;font-size:14px;width:9px;text-align:center}
.z-track{width:100px;height:1px;background:#fff;position:relative;margin:0 4px}
.z-thumb{position:absolute;left:49px;top:-5px;width:3px;height:11px;background:#fff}
.z-val{width:33px;margin:0 7px 0 15px}
.z-last{margin-left:14px}

/* taskbar */
.taskbar{height:41px;background:#0b1018;border-bottom:2px solid #0a5a22;display:flex;align-items:center;color:#eee;flex:none}
.tb{height:39px;display:flex;align-items:center;justify-content:center;flex:none;position:relative}
.tb48{width:48px}
.tb49{width:49px}
.tb50{width:50px}
.tb-run::after{content:"";position:absolute;left:4px;right:4px;bottom:0;height:2px;background:#9fc8e8}
.tb-active{background:#2a2e36}
.tb-active::after{left:0;right:0}
.tray{margin-left:auto;display:flex;align-items:center;height:39px}
.tr-chev{margin-left:21px}
.tr-vol{margin-left:10px}
.tr-lang{margin-left:15px;font:11px "DejaVu Sans",sans-serif;width:14px}
.clock{display:flex;flex-direction:column;align-items:center;width:64px;margin-left:8px;font-size:11px;line-height:18px}
.tr-note{margin-left:13px}
.tr-edge{width:1px;height:39px;background:#777;margin-left:21px;margin-right:3px}

.watermark{position:absolute;left:18px;top:668px;font:700 33px/40px "Liberation Sans",sans-serif;letter-spacing:1.100px;color:rgba(205,205,205,.6);white-space:nowrap;pointer-events:none}
```
